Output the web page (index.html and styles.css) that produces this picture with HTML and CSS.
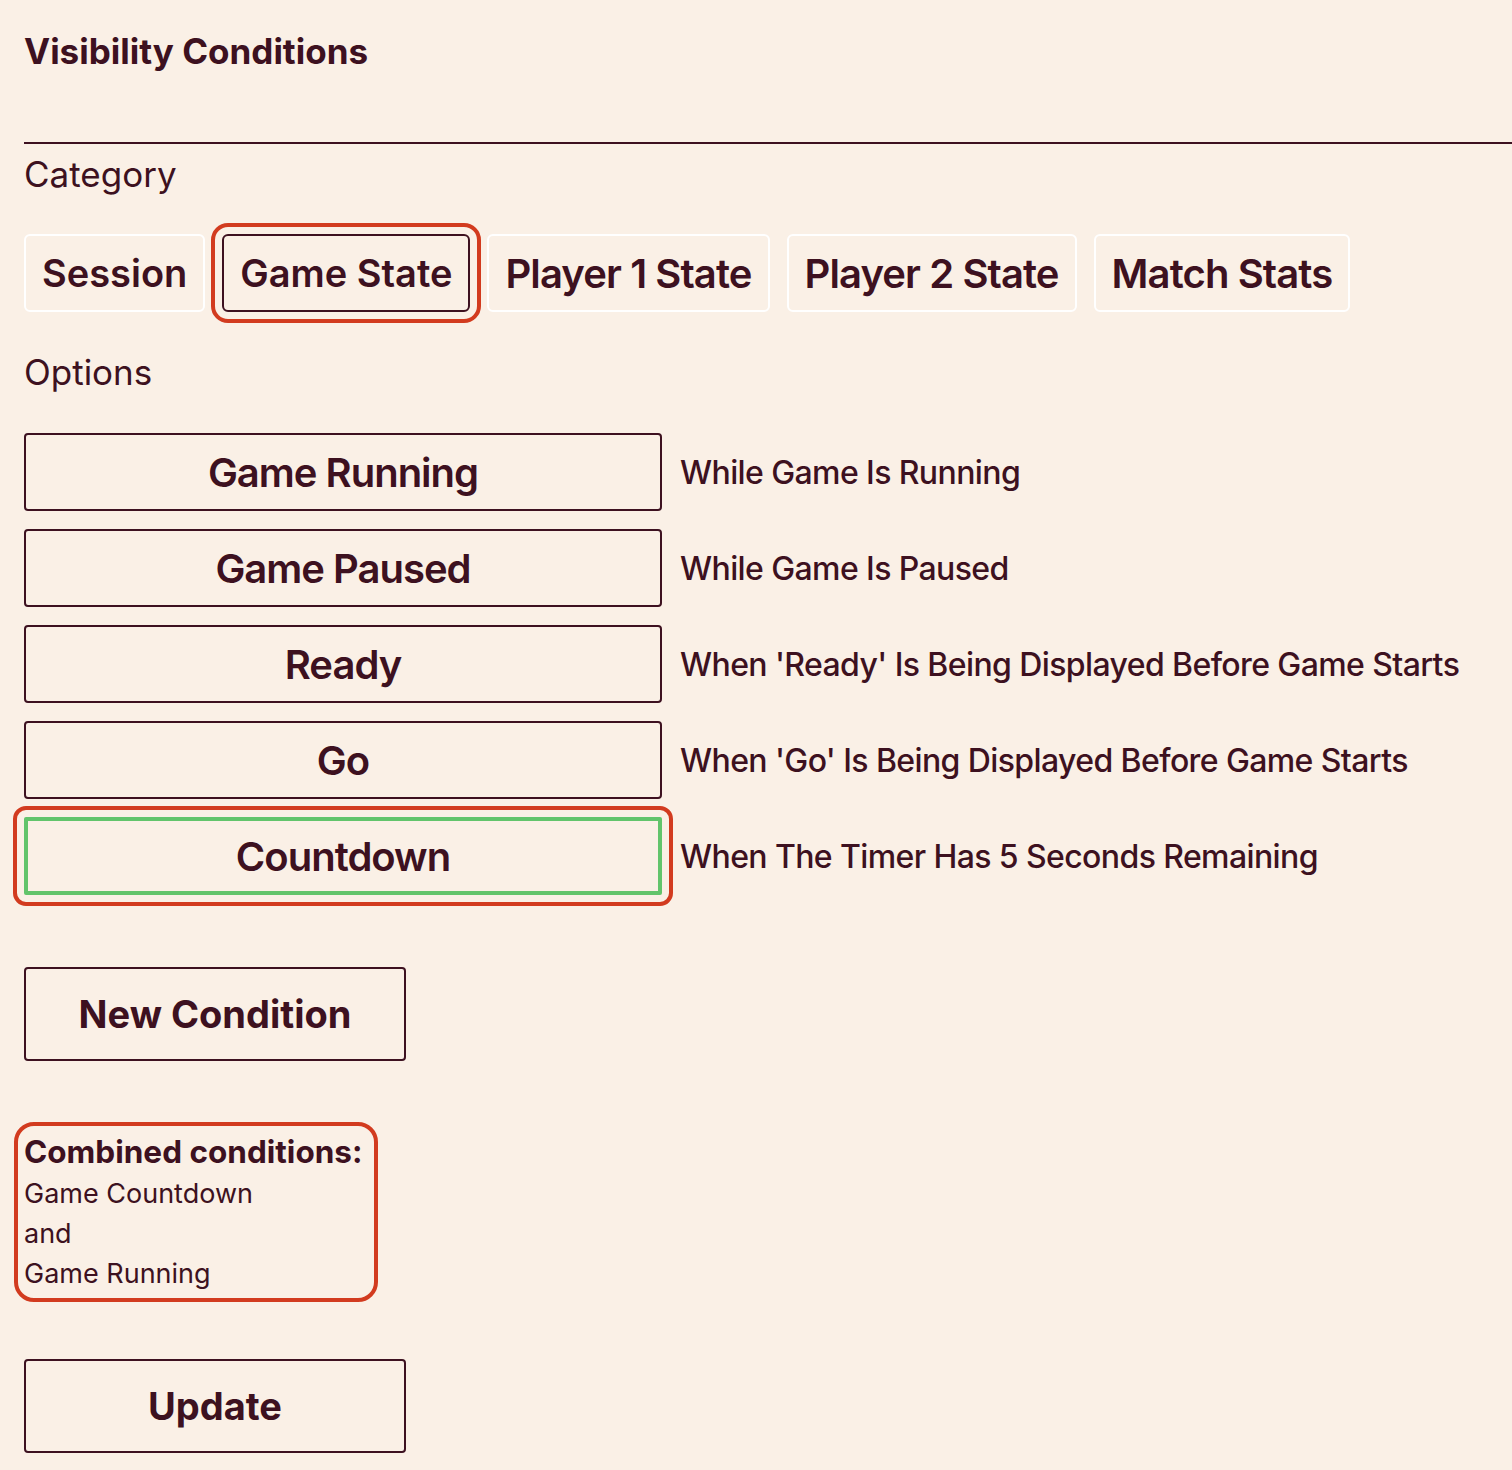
FILE: index.html
```html
<!DOCTYPE html>
<html lang="en">
<head>
<meta charset="utf-8">
<title>Visibility Conditions</title>
<link rel="stylesheet" href="styles.css">
</head>
<body>
<div class="page">
  <h1 class="title">Visibility Conditions</h1>
  <hr class="rule">
  <div class="label">Category</div>
  <div class="tabs">
    <button class="tab">Session</button>
    <button class="tab tab-active">Game State</button>
    <button class="tab tab-narrow">Player 1 State</button>
    <button class="tab tab-narrow">Player 2 State</button>
    <button class="tab tab-narrow">Match Stats</button>
  </div>
  <div class="label label-options">Options</div>
  <div class="options">
    <div class="option-row">
      <button class="option">Game Running</button>
      <span class="desc">While Game Is Running</span>
    </div>
    <div class="option-row">
      <button class="option">Game Paused</button>
      <span class="desc">While Game Is Paused</span>
    </div>
    <div class="option-row">
      <button class="option">Ready</button>
      <span class="desc">When 'Ready' Is Being Displayed Before Game Starts</span>
    </div>
    <div class="option-row">
      <button class="option">Go</button>
      <span class="desc">When 'Go' Is Being Displayed Before Game Starts</span>
    </div>
    <div class="option-row">
      <button class="option option-selected">Countdown</button>
      <span class="desc">When The Timer Has 5 Seconds Remaining</span>
    </div>
  </div>
  <button class="action action-new">New Condition</button>
  <div class="combined">
    <div class="combined-title">Combined conditions:</div>
    <div class="combined-line">Game Countdown</div>
    <div class="combined-line">and</div>
    <div class="combined-line">Game Running</div>
  </div>
  <button class="action action-update">Update</button>
</div>
</body>
</html>
```
FILE: styles.css
```css
html, body {
  margin: 0;
  padding: 0;
  background: #faf0e6;
}
body {
  font-family: Inter, "Noto Sans", sans-serif;
  color: #3d1120;
  overflow: hidden;
}
.page {
  padding: 0 0 0 24px;
  display: flex;
  flex-direction: column;
  align-items: flex-start;
}
.title {
  margin: 26px 0 0 0;
  font-size: 35px;
  font-weight: 700;
  line-height: 50px;
}
.rule {
  align-self: stretch;
  margin: 66px 0 0 0;
  border: none;
  height: 2px;
  background: #3d1120;
}
.label {
  font-size: 35px;
  font-weight: 400;
  line-height: 60px;
  margin-top: 0;
}
.label-options {
  margin-top: 30px;
}
.tabs {
  display: flex;
  gap: 17px;
  margin-top: 30px;
}
button {
  font-family: inherit;
  color: inherit;
  background: transparent;
  cursor: pointer;
}
.tab {
  height: 78px;
  padding: 0 16px;
  border: 2px solid #ffffff;
  border-radius: 6px;
  font-size: 38px;
  font-weight: 600;
}
.tab-narrow {
  font-size: 40px;
  letter-spacing: -0.9px;
}
.tab-active {
  border-color: #3d1120;
  outline: 4px solid #d23b1f;
  outline-offset: 7px;
}
.options {
  display: flex;
  flex-direction: column;
  gap: 18px;
  margin-top: 31px;
}
.option-row {
  display: flex;
  align-items: center;
  gap: 18px;
}
.option {
  width: 638px;
  height: 78px;
  border: 2px solid #3d1120;
  border-radius: 4px;
  font-size: 40px;
  font-weight: 600;
  letter-spacing: -1px;
}
.option-selected {
  border: 4px solid #62c46b;
  border-radius: 2px;
  outline: 4px solid #d23b1f;
  outline-offset: 7px;
}
.desc {
  font-size: 32px;
  font-weight: 500;
  letter-spacing: -0.6px;
}
.action {
  width: 382px;
  height: 94px;
  border: 2px solid #3d1120;
  border-radius: 4px;
  font-size: 38px;
  font-weight: 700;
}
.action-new {
  margin-top: 72px;
}
.combined {
  margin: 61px 0 0 -10px;
  padding: 4px 12px 4px 6px;
  border: 4px solid #d23b1f;
  border-radius: 20px;
}
.combined-title {
  font-size: 31.5px;
  font-weight: 700;
  line-height: 44px;
}
.combined-line {
  font-size: 27px;
  line-height: 40px;
}
.action-update {
  margin-top: 57px;
}
```
